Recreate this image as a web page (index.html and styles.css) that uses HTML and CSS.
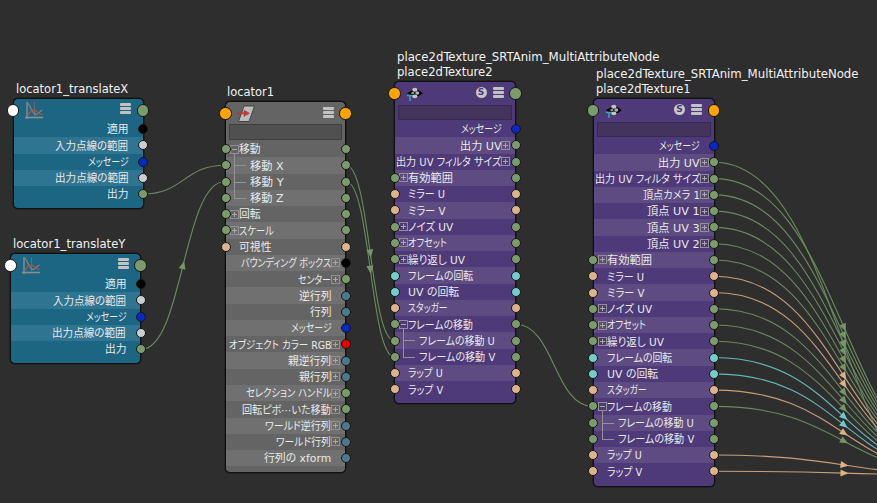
FILE: index.html
```html
<!DOCTYPE html>
<html lang="ja">
<head>
<meta charset="utf-8">
<title>Node Editor</title>
<link rel="stylesheet" href="styles.css">
</head>
<body>
<svg class="symbols" aria-hidden="true">
  <symbol id="icon-curve" viewBox="0 0 20 20">
    <path d="M2 2v17M0 17.5h18" stroke="#8b9193" stroke-width="1.3" fill="none"/>
    <path d="M9.5 2v15" stroke="#6d6a68" stroke-width="1" fill="none"/>
    <path d="M2 2.5c3 2 4.5 9 7.5 11.5s5-3 8-4" stroke="#7d8385" stroke-width="1.3" fill="none"/>
    <path d="M3 15.5c2-4 4-6 6.500-5.500s3 4.500 8 4.500" stroke="#a5563e" stroke-width="1.4" fill="none"/>
  </symbol>
  <symbol id="icon-locator" viewBox="0 0 18 18">
    <path d="M7 1h10.500L12 16.500H1.500z" fill="#bdbdbd" stroke="#454545" stroke-width="1"/>
    <path d="M0 7.600h7V5l5.500 3.300-5.500 3.300V9H0z" fill="#c6393d" stroke="#8b4144" stroke-width=".4"/>
  </symbol>
  <symbol id="icon-texture" viewBox="0 0 18 14">
    <path d="M1 6.300L7 2.500h4.500L17 6.300 11.500 10H7z" fill="#080808"/>
    <ellipse cx="8.800" cy="2.800" rx="2.600" ry="2" fill="#c4c4c4"/>
    <ellipse cx="11.300" cy="6" rx="2" ry="1.700" fill="#b0b0b0"/>
    <ellipse cx="6.800" cy="6" rx="1.500" ry="1.300" fill="#8e8e8e"/>
    <ellipse cx="8.800" cy="9.300" rx="2.600" ry="1.900" fill="#c4c4c4"/>
    <path d="M1 8.500h6M4 8.500v5.500" stroke="#3ba5b0" stroke-width="1.500" fill="none"/>
  </symbol>
</svg>
<main class="graph" id="graph">
  <svg class="wires" id="wires" width="877" height="503"></svg>
</main>
<script src="graph.js"></script>
</body>
</html>
```
FILE: styles.css
```css
* { box-sizing: border-box; }

body {
  margin: 0;
  background: #2e2e2e;
  overflow: hidden;
}

.symbols { position: absolute; width: 0; height: 0; }

.graph {
  position: relative;
  width: 877px;
  height: 503px;
  overflow: hidden;
  color: #e9e9e9;
  font-family: "DejaVu Sans", "Noto Sans CJK JP", sans-serif;
  font-size: 11px;
}

.wires { position: absolute; inset: 0; }
.wires path { fill: none; stroke-width: 1.1; }
.wires .green { stroke: #6c8a60; }
.wires .peach { stroke: #c79f7b; }
.wires .cyan { stroke: #68b7b8; }
.wires polygon.green { fill: #759767; stroke: none; }
.wires polygon.peach { fill: #dcb288; stroke: none; }
.wires polygon.cyan { fill: #72c9cc; stroke: none; }

.node {
  position: absolute;
  display: flex;
  flex-direction: column;
  border: 1px solid #111;
  border-radius: 5px;
  box-shadow: 0 0 0 0.5px #161616;
}
.node.blue { background: #1c6683; --stripe: #2f7490; }
.node.gray { background: #646464; --stripe: #707070; --field: #505050; --field-edge: #3f3f3f; }
.node.purple { background: #4e3a78; --stripe: #5d4b82; --field: #43335d; --field-edge: #352a52; }

.title {
  position: absolute;
  bottom: 100%;
  left: 2px;
  padding-bottom: 3px;
  color: #f2f2f2;
  font-family: "DejaVu Sans Condensed", "DejaVu Sans", sans-serif;
  font-stretch: condensed;
  font-size: 12.5px;
  line-height: 15px;
}
.gray .title { left: 1px; }

.header {
  position: relative;
  display: flex;
  align-items: center;
  gap: 6px;
  height: 23px;
  padding: 0 11.5px 0 11px;
  flex: none;
}
.blue .header { height: 22px; }
.header .icon { margin-right: auto; }
.menu { width: 11px; height: 11px; display: flex; flex-direction: column; justify-content: space-between; margin-top: -3px; }
.menu i { height: 3px; background: #c2c2c2; border-radius: 1px; }
.badge {
  width: 11px; height: 11px; border-radius: 50%; margin-top: -3px;
  background: #c8c8c8; color: #4e3a78;
  font: bold 9px/11px "DejaVu Sans", sans-serif; text-align: center;
}

.field { flex: none; height: 15px; margin: 0 3px 1px; background: var(--field); border: 1px solid var(--field-edge); }
.gray .field { height: 16px; margin-top: -1px; }

.row {
  position: relative;
  display: flex;
  align-items: center;
  flex: none;
  height: 16.27px;
}
.row:nth-child(even of .row) { background: var(--stripe); }
.row.out { justify-content: flex-end; padding-right: 14px; }
.row.out.boxed { padding-right: 5px; }
.row.in { padding-left: 13px; }
.row.in.boxed { padding-left: 4px; }
.row.child { padding-left: 24px; }

.fit { flex: none; display: block; height: 15px; line-height: 15px; }
.fit span {
  display: inline-block;
  white-space: pre;
  transform-origin: 0 50%;
  font-feature-settings: "palt";
}
.row .fit { position: relative; top: 0.8px; }

.box {
  position: relative;
  flex: none;
  width: 9px; height: 9px;
  border: 1px solid #918f91;
}
.box::before { content: ""; position: absolute; left: 1px; right: 1px; top: 3px; height: 1px; background: #aaa6aa; }
.box.plus::after { content: ""; position: absolute; top: 1px; bottom: 1px; left: 3px; width: 1px; background: #aaa6aa; }

.child::before { content: ""; position: absolute; left: 8px; top: -4px; height: 12.5px; border-left: 1px solid #949194; }
.child + .child::before { top: -8.5px; height: 17px; }
.child::after { content: ""; position: absolute; left: 8px; top: 8px; width: 12px; height: 1px; background: #949194; }

.port {
  position: absolute;
  z-index: 2;
  top: 50%;
  width: 10px; height: 10px;
  margin: -5px;
  border: 1px solid #161616;
  border-radius: 50%;
}
.port.left { left: -0.5px; }
.port.right { left: calc(100% + 0.5px); }
.header .port { width: 12.5px; height: 12.5px; margin: -6.5px -6.25px; }
.blue .header .port { margin-top: -6px; }
.port.green { background: #7b9b6d; }
.port.peach { background: #dbb48d; }
.port.cyan { background: #76cbcb; }
.port.steel { background: #4d7889; }
.port.blue { background: #0828c4; }
.port.red { background: #f00000; }
.port.black { background: #000; }
.port.silver { background: #c9ced1; }
.port.white { background: #fff; }
.port.orange { background: #ffa500; }
```
FILE: graph.js
```js
// Row: [kind, label, label width, port colour, box]
const curveRows = [
  ['out', '適用', 21.5, 'black'],
  ['out', '入力点線の範囲', 73.5, 'silver'],
  ['out', 'メッセージ', 40.5, 'blue'],
  ['out', '出力点線の範囲', 74, 'silver'],
  ['out', '出力', 21.5, 'green']
];
const placementRows = [
  ['in', '有効範囲', 45, 'green', 'plus'],
  ['in', 'ミラー U', 37, 'peach'],
  ['in', 'ミラー V', 37, 'peach'],
  ['in', 'ノイズ UV', 45, 'green', 'plus'],
  ['in', 'オフセット', 39, 'green', 'plus'],
  ['in', '繰り返し UV', 57.5, 'green', 'plus'],
  ['in', 'フレームの回転', 65, 'cyan'],
  ['in', 'UV の回転', 51.5, 'cyan'],
  ['in', 'スタッガー', 40, 'peach'],
  ['in', 'フレームの移動', 64.5, 'green', 'minus'],
  ['child', 'フレームの移動 U', 76, 'green'],
  ['child', 'フレームの移動 V', 76, 'green'],
  ['in', 'ラップ U', 35, 'peach'],
  ['in', 'ラップ V', 35, 'peach']
];
const outputRows = [
  ['out', 'メッセージ', 40.5, 'blue'],
  ['out', '出力 UV', 41.5, 'green', 'plus'],
  ['out', '出力 UV フィルタ サイズ', 105, 'green', 'plus']
];

const nodes = [
  { x: 12.5, y: 98, w: 131, h: 111, theme: 'blue', icon: 'curve', left: 'white', right: 'green',
    titles: [['locator1_translateX', 112.5]], rows: curveRows },
  { x: 10, y: 253, w: 131, h: 111, theme: 'blue', icon: 'curve', left: 'white', right: 'green',
    titles: [['locator1_translateY', 112.5]], rows: curveRows },
  { x: 225, y: 101, w: 121, h: 372, theme: 'gray', icon: 'locator', left: 'orange', right: 'orange', field: true,
    titles: [['locator1', 47]], rows: [
      ['in', '移動', 21.5, 'green', 'minus'],
      ['child', '移動 X', 33.5, 'green'],
      ['child', '移動 Y', 33.5, 'green'],
      ['child', '移動 Z', 33.5, 'green'],
      ['in', '回転', 21.5, 'green', 'plus'],
      ['in', 'スケール', 34.5, 'green', 'plus'],
      ['in', '可視性', 32.5, 'peach'],
      ['out', 'バウンディング ボックス', 90, 'black', 'plus'],
      ['out', 'センター', 33, 'green', 'plus'],
      ['out', '逆行列', 32.5, 'steel'],
      ['out', '行列', 21.5, 'steel'],
      ['out', 'メッセージ', 40.5, 'blue'],
      ['out', 'オブジェクト カラー RGB', 102.5, 'red', 'plus'],
      ['out', '親逆行列', 43, 'steel', 'plus'],
      ['out', '親行列', 32.5, 'steel', 'plus'],
      ['out', 'セレクション ハンドル', 85.5, 'green', 'plus'],
      ['out', '回転ピボ⋯いた移動', 89, 'green', 'plus'],
      ['out', 'ワールド逆行列', 66, 'steel', 'plus'],
      ['out', 'ワールド行列', 55, 'steel', 'plus'],
      ['out', '行列の xform', 67, 'steel']
    ] },
  { x: 394, y: 81, w: 122, h: 323, theme: 'purple', icon: 'texture', left: 'orange', right: 'green', field: true, badge: true,
    titles: [['place2dTexture_SRTAnim_MultiAttributeNode', 262.5], ['place2dTexture2', 96]],
    rows: [...outputRows, ...placementRows] },
  { x: 592.5, y: 98, w: 122, h: 388.5, theme: 'purple', icon: 'texture', left: 'green', right: 'orange', field: true, badge: true,
    titles: [['place2dTexture_SRTAnim_MultiAttributeNode', 262.5], ['place2dTexture1', 95]],
    rows: [...outputRows,
      ['out', '頂点カメラ 1', 57, 'green', 'plus'],
      ['out', '頂点 UV 1', 53, 'green', 'plus'],
      ['out', '頂点 UV 3', 53, 'green', 'plus'],
      ['out', '頂点 UV 2', 53, 'green', 'plus'],
      ...placementRows] }
];

const fit = (text, width) => `<div class="fit" data-width="${width}" style="width:${width}px"><span>${text}</span></div>`;
const port = (side, color) => `<i class="port ${side} ${color}"></i>`;

function rowHtml([kind, label, width, color, box]) {
  const boxHtml = box ? `<i class="box ${box}"></i>` : '';
  const text = fit(label, width);
  const body = kind === 'out' ? text + boxHtml : boxHtml + text;
  const left = kind === 'out' ? '' : port('left', color);
  return `<div class="row ${kind} ${box ? 'boxed' : ''}">${left}${body}${port('right', color)}</div>`;
}

const iconSizes = { curve: [20, 20], locator: [18, 18], texture: [18, 14] };

function nodeHtml(n) {
  const [iw, ih] = iconSizes[n.icon];
  return `<section class="node ${n.theme}" style="left:${n.x}px;top:${n.y}px;width:${n.w}px;height:${n.h}px">
    <div class="title">${n.titles.map(t => fit(...t)).join('')}</div>
    <div class="header">${port('left', n.left)}
      <svg class="icon" width="${iw}" height="${ih}"><use href="#icon-${n.icon}"/></svg>
      ${n.badge ? '<span class="badge">S</span>' : ''}
      <span class="menu"><i></i><i></i><i></i></span>${port('right', n.right)}
    </div>
    ${n.field ? '<div class="field"></div>' : ''}
    ${n.rows.map(rowHtml).join('')}
  </section>`;
}

const graph = document.getElementById('graph');
graph.insertAdjacentHTML('beforeend', nodes.map(nodeHtml).join(''));

document.querySelectorAll('.fit').forEach(el => {
  const span = el.firstElementChild;
  span.style.transform = `scaleX(${el.dataset.width / span.offsetWidth})`;
});

// Wire: [x1, y1, x2, y2, colour, has arrow]
const wires = [
  [143, 194, 225, 165.3, 'green', false],
  [141, 349.5, 225, 181.5, 'green', true],
  [346, 165.3, 394.5, 340.7, 'green', true],
  [346, 181.5, 394.5, 357, 'green', true],
  [515.5, 324.3, 593, 406.5, 'green', false],
  [714, 162.3, 974, 527, 'green', true]
];
const outputs = ['green', 'green', 'green', 'green', 'green', 'green', 'peach', 'peach',
  'green', 'green', 'green', 'cyan', 'cyan', 'peach', 'green'];
const outputYs = outputs.map((_, i) => 178.6 + i * 16.27);
outputs.forEach((color, i) => wires.push([714, outputYs[i], 974, 476, color, true]));
wires.push([714, 455, 974, 475, 'peach', true], [714, 471.3, 974, 475, 'peach', true]);

document.getElementById('wires').innerHTML = wires.map(([x1, y1, x2, y2, color, hasArrow]) => {
  const mx = (x1 + x2) / 2, my = (y1 + y2) / 2;
  const angle = Math.atan2(2 * (y2 - y1), x2 - x1) * 180 / Math.PI;
  const arrow = hasArrow
    ? `<polygon class="${color}" points="-3.5,-3.5 4.5,0 -3.5,3.5" transform="translate(${mx} ${my}) rotate(${angle})"/>`
    : '';
  return `<path class="${color}" d="M${x1} ${y1}C${mx} ${y1} ${mx} ${y2} ${x2} ${y2}"/>${arrow}`;
}).join('');
```
